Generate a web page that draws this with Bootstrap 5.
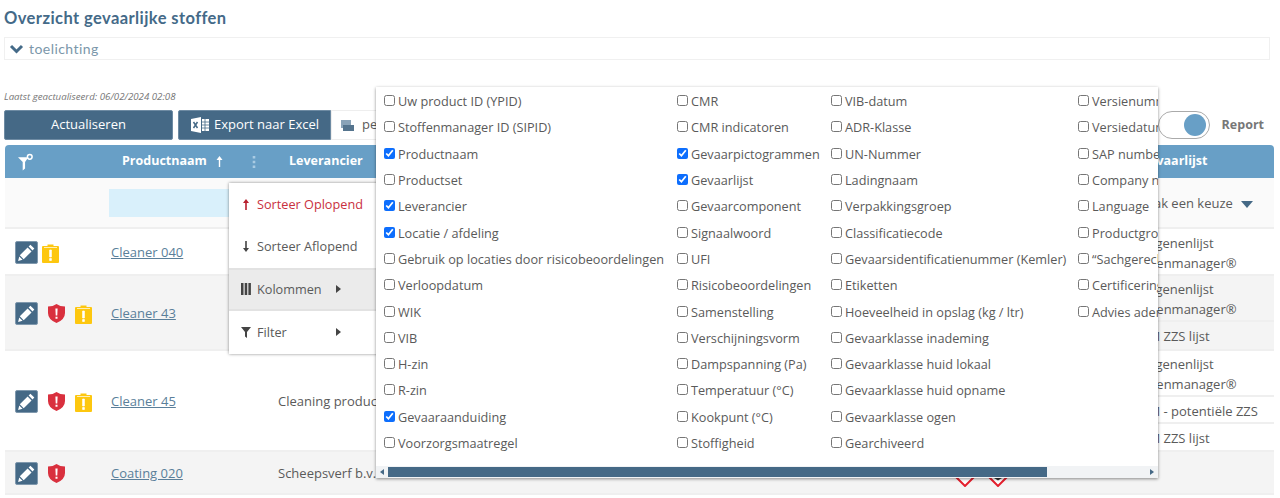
<!DOCTYPE html>
<html lang="nl">
<head>
    <meta charset="UTF-8">
    <title>Overzicht gevaarlijke stoffen</title>
    <link href="https://cdn.jsdelivr.net/npm/bootstrap@5.3.0/dist/css/bootstrap.min.css" rel="stylesheet">
    <style>
        body {
            font-family: "Open Sans", sans-serif;
            font-size: 13px;
            color: #5a5a5a;
            background: #fff;
            position: relative;
            overflow: hidden;
            height: 498px;
        }

        .page-title {
            font-family: Lato, sans-serif;
            font-size: 16.500px;
            font-weight: 700;
            letter-spacing: .42px;
            color: #446a88;
            line-height: 20px;
            margin: 8px 0 9px 4px;
        }

        .toelichting-bar {
            height: 23px;
            margin: 0 10px 0 4px;
            border: 1px solid #f0f0f0;
            color: #7b97aa;
            font-family: Lato, sans-serif;
            font-size: 14px;
            letter-spacing: .45px;
            padding-left: 4px;
            gap: 5px;
        }

        .updated-text {
            font-size: 9.700px;
            font-style: italic;
            color: #777;
            line-height: 12px;
            margin: 31px 0 7px 4px;
        }

        .tool-row {
            height: 30px;
            margin: 0 6px 5px 4px;
        }

        .btn-blue {
            background: #456986;
            color: #fff;
            border: 1px solid #6e8ba3;
            border-radius: 2px;
            height: 30px;
            padding: 0;
            font-size: 13px;
        }

        .btn-refresh { width: 169px; margin-right: 5px; }

        .btn-export { width: 153px; border-radius: 2px 0 0 2px; gap: 5px; padding-left: 1px; }

        .select-box {
            width: 200px;
            height: 30px;
            padding-left: 9px;
            gap: 8px;
            border: 1px solid #eee;
            font-size: 13px;
        }

        .report-toggle {
            width: 52px;
            height: 28px;
            border: 1px solid #aaa;
            border-radius: 14px;
            padding-right: 3px;
            margin-right: 12px;
        }

        .toggle-dot {
            width: 22px;
            height: 22px;
            border-radius: 50%;
            background: #689fc6;
        }

        .report-label {
            font-size: 12.500px;
            font-weight: 700;
            color: #777;
            margin-right: 10px;
        }

        .stof-table {
            table-layout: fixed;
            width: 1269px;
            margin-left: 5px;
            border-collapse: separate;
            border-spacing: 0;
        }

        .w-a { width: 100px; }
        .w-b { width: 165px; }
        .w-c { width: 200px; }
        .w-d { width: 115px; }
        .w-e { width: 355px; }
        .w-f { width: 185px; }
        .w-g { width: 149px; }

        .stof-table th {
            background: #689fc6;
            color: #fff;
            height: 33px;
            font-size: 12.500px;
            font-weight: 700;
            padding: 0;
            white-space: nowrap;
        }

        .stof-table th:first-child { border-radius: 4px 0 0 0; padding-left: 13px; }
        .stof-table th:last-child { border-radius: 0 4px 0 0; padding-left: 15px; }

        .head-name { margin-left: 17px; }
        .head-sort { margin-left: 9px; }
        .head-dots { margin-left: 29px; }
        .head-lev { margin-left: 19px; }

        .stof-table td {
            padding: 0 0 0 7px;
            white-space: nowrap;
            overflow: hidden;
            border-bottom: 2px solid #efefef;
            font-size: 13px;
        }

        .row-filter td { height: 51px; background: #fafafa; }
        .row-a td { height: 47px; background: #fff; padding-top: 2px; }
        .row-b td { height: 75px; background: #f4f4f4; padding-top: 2px; }
        .row-c td { height: 101px; background: #fff; padding-top: 2px; }
        .row-d td { height: 43px; background: #f4f4f4; padding-top: 2px; }

        .stof-table td:first-child { padding-left: 10px; }
        .stof-table td:nth-child(2) { padding-left: 6px; }
        .stof-table td:nth-child(3) { padding-left: 8px; }
        .stof-table td:last-child { padding-left: 0; padding-top: 0; vertical-align: top; }

        .stof-table td.filter-cell { padding-left: 4px; }
        .stof-table td.hazard-cell { padding-bottom: 3px; }
        .stof-table td.picto-cell { padding-left: 11px; padding-top: 0; }

        .filter-input {
            height: 28px;
            width: 190px;
            background: #d9f0fb;
        }

        .keuze-cell {
            height: 49px;
            padding: 3px 21px 0 10px;
        }

        .keuze-arrow {
            width: 0;
            height: 0;
            border-left: 6px solid transparent;
            border-right: 6px solid transparent;
            border-top: 7px solid #456986;
        }

        .list-cell {
            padding-left: 3px;
            line-height: 20px;
            border-bottom: 2px solid #efefef;
        }

        .list-cell:last-child { border-bottom: 0; }
        .list-two { height: 46px; padding-top: 3px; }
        .list-one { height: 27px; padding-top: 4px; padding-left: 4px; }
        .list-one:last-child { height: 26px; }
        .row-b .list-one:last-child { height: 27px; }
        .row-a .list-two { height: 45px; padding-top: 4px; }

        .product-link { color: #5a7f9a; }

        .edit-btn {
            width: 23px;
            height: 23px;
            background: #456986;
            border: 1px solid #7f98ad;
            border-radius: 2px;
        }

        .icon-row { height: 24px; }
        .gap-shield { margin-left: 10px; }
        .gap-clip { margin-left: 10px; }
        .gap-clip-first { margin-left: 4px; }
        .picto-gap { margin-left: 5px; }

        .context-menu {
            position: absolute;
            left: 229px;
            top: 183px;
            width: 150px;
            height: 171px;
            background: #fff;
            box-shadow: 0 0 3px rgba(0, 0, 0, .45);
            font-size: 12.700px;
        }

        .menu-item {
            height: 42.600px;
            padding-left: 12px;
            gap: 6px;
        }

        .menu-item.is-red { color: #c9303e; }
        .menu-item.is-open {
            background: #ebebeb;
            border-top: 2px solid #e2e2e2;
            border-bottom: 2px solid #e2e2e2;
        }

        .menu-icon { width: 10px; flex: none; }
        .menu-tri {
            width: 0;
            height: 0;
            margin-left: auto;
            margin-right: 38px;
            border-top: 4px solid transparent;
            border-bottom: 4px solid transparent;
            border-left: 5px solid #444;
        }

        .column-panel {
            position: absolute;
            left: 376px;
            top: 87px;
            width: 782px;
            height: 391px;
            background: #fff;
            box-shadow: 0 1px 3px rgba(0, 0, 0, .45);
            overflow: hidden;
        }

        .panel-cols { padding: 1.500px 0 0 8px; white-space: nowrap; }
        .panel-col { flex: none; }
        .col-one { width: 293px; }
        .col-two { width: 154px; }
        .col-three { width: 247px; }

        .check-line {
            height: 26.300px;
            gap: 3px;
            font-size: 12.700px;
            color: #5a5a5a;
        }

        .check-line input {
            width: 11px;
            height: 11px;
            margin: 0;
            flex: none;
            accent-color: #0d6efd;
            position: relative;
            top: -1px;
        }

        .fake-scroll {
            position: absolute;
            left: 0;
            right: 0;
            bottom: 0;
            height: 12px;
            background: #f1f3f5;
            padding: 0 4px;
        }

        .scroll-thumb {
            width: 659px;
            height: 10px;
            margin-left: 4px;
            background: #456986;
        }

        .scroll-end-l, .scroll-end-r {
            width: 0;
            height: 0;
            border-top: 3px solid transparent;
            border-bottom: 3px solid transparent;
        }

        .scroll-end-l { border-right: 4px solid #456986; }
        .scroll-end-r { border-left: 4px solid #456986; margin-left: auto; margin-right: 0; }
    </style>
</head>
<body>

<h1 class="page-title">Overzicht gevaarlijke stoffen</h1>

<div class="toelichting-bar d-flex align-items-center">
    <svg width="15" height="10" viewBox="0 0 15 10"><path d="M2 2l5.500 5.500L13 2" fill="none" stroke="#446a88" stroke-width="3"/></svg>
    <span>toelichting</span>
</div>

<div class="updated-text">Laatst geactualiseerd: 06/02/2024 02:08</div>

<div class="tool-row d-flex align-items-center">
    <button class="btn-blue btn-refresh">Actualiseren</button>
    <button class="btn-blue btn-export d-flex align-items-center justify-content-center">
        <svg width="18" height="16" viewBox="0 0 18 16">
            <path d="M0 2l10-2v16L0 14z" fill="#fff"/>
            <path d="M11 2h7v12h-7z" fill="#fff"/>
            <path d="M2.500 5l4 6M6.500 5l-4 6" stroke="#456986" stroke-width="1.500"/>
            <path d="M11 5h7M11 8h7M11 11h7M14 2v12" stroke="#456986" stroke-width=".8"/>
        </svg>
        <span>Export naar Excel</span>
    </button>
    <div class="select-box d-flex align-items-center">
        <svg width="13" height="11" viewBox="0 0 13 11"><path d="M0 0h10v8H0z" fill="#8aa3b8"/><path d="M2 5h11v6H2z" fill="#55748e"/></svg>
        <span>personeel</span>
    </div>
    <div class="report-toggle d-flex align-items-center justify-content-end ms-auto">
        <span class="toggle-dot"></span>
    </div>
    <span class="report-label">Report</span>
</div>

<table class="stof-table">
    <colgroup>
        <col class="w-a"><col class="w-b"><col class="w-c"><col class="w-d"><col class="w-e"><col class="w-f"><col class="w-g">
    </colgroup>
    <thead>
    <tr>
        <th>
            <svg width="16" height="18" viewBox="0 0 17 18">
                <path d="M0 4h11L7.500 9v7L5 18V9z" fill="#fff"/>
                <circle cx="12.500" cy="3.500" r="2.500" fill="none" stroke="#fff" stroke-width="1.600"/>
            </svg>
        </th>
        <th>
            <div class="d-flex align-items-center">
                <span class="head-name">Productnaam</span>
                <svg class="head-sort" width="7" height="11" viewBox="0 0 7 11"><path d="M3.500 0L6.500 4H4.200v7H2.800V4H.5z" fill="#fff"/></svg>
                <svg class="head-dots" width="4" height="12" viewBox="0 0 4 12"><path d="M.7 0h2.600v2.600H.7zM.7 4.700h2.600v2.600H.7zM.7 9.400h2.600V12H.7z" fill="#a9cbe3"/></svg>
            </div>
        </th>
        <th><span class="head-lev">Leverancier</span></th>
        <th>Locatie</th>
        <th>Gevaaraanduiding</th>
        <th>Gevaarpictogrammen</th>
        <th>Gevaarlijst</th>
    </tr>
    </thead>
    <tbody>
    <tr class="row-filter">
        <td></td>
        <td class="filter-cell" colspan="2"><div class="filter-input"></div></td>
        <td></td>
        <td></td>
        <td></td>
        <td>
            <div class="keuze-cell d-flex align-items-center justify-content-between">
                <span>Maak een keuze</span>
                <span class="keuze-arrow"></span>
            </div>
        </td>
    </tr>
    <tr class="row-a">
        <td>
            <div class="icon-row d-flex align-items-center">
                <span class="edit-btn d-flex align-items-center justify-content-center">
                    <svg width="19" height="19" viewBox="0 0 17 17"><path d="M12 1.500l3.500 3.500-1.600 1.600-3.500-3.500zM9.500 4l3.500 3.500L6 14.500 2.500 11zM2 12l3 3-4 1z" fill="#fff"/></svg>
                </span>
                <svg class="gap-clip-first" width="17" height="20" viewBox="0 0 17 20"><path d="M1 3h4.500V1.500h6V3H16q1 0 1 1v15q0 1-1 1H1q-1 0-1-1V4q0-1 1-1z" fill="#fdc70f"/><path d="M2 4.500h13M7.600 7h1.800v7H7.600zM7.600 15.500h1.800v2H7.600z" stroke="#fff" stroke-width=".7" fill="#fff"/></svg>
            </div>
        </td>
        <td><a class="product-link" href="#">Cleaner 040</a></td>
        <td></td>
        <td></td>
        <td></td>
        <td></td>
        <td>
            <div class="list-cell list-two">Allergenenlijst<br>Stoffenmanager®</div>
        </td>
    </tr>
    <tr class="row-b">
        <td>
            <div class="icon-row d-flex align-items-center">
                <span class="edit-btn d-flex align-items-center justify-content-center">
                    <svg width="19" height="19" viewBox="0 0 17 17"><path d="M12 1.500l3.500 3.500-1.600 1.600-3.500-3.500zM9.500 4l3.500 3.500L6 14.500 2.500 11zM2 12l3 3-4 1z" fill="#fff"/></svg>
                </span>
                <svg class="gap-shield" width="17" height="19" viewBox="0 0 17 19"><path d="M8.500 0q3.500 2.500 8.500 2.500V9q0 6.500-8.500 10Q0 15.500 0 9V2.500Q5 2.500 8.500 0z" fill="#d9303e"/><path d="M7.400 4.500h2.200l-.3 7H7.700zM7.500 12.800h2v2h-2z" fill="#fff"/></svg>
                <svg class="gap-clip" width="17" height="20" viewBox="0 0 17 20"><path d="M1 3h4.500V1.500h6V3H16q1 0 1 1v15q0 1-1 1H1q-1 0-1-1V4q0-1 1-1z" fill="#fdc70f"/><path d="M2 4.500h13M7.600 7h1.800v7H7.600zM7.600 15.500h1.800v2H7.600z" stroke="#fff" stroke-width=".7" fill="#fff"/></svg>
            </div>
        </td>
        <td><a class="product-link" href="#">Cleaner 43</a></td>
        <td></td>
        <td></td>
        <td></td>
        <td></td>
        <td>
            <div class="list-cell list-two">Allergenenlijst<br>Stoffenmanager®</div>
            <div class="list-cell list-one">RIVM ZZS lijst</div>
        </td>
    </tr>
    <tr class="row-c">
        <td>
            <div class="icon-row d-flex align-items-center">
                <span class="edit-btn d-flex align-items-center justify-content-center">
                    <svg width="19" height="19" viewBox="0 0 17 17"><path d="M12 1.500l3.500 3.500-1.600 1.600-3.500-3.500zM9.500 4l3.500 3.500L6 14.500 2.500 11zM2 12l3 3-4 1z" fill="#fff"/></svg>
                </span>
                <svg class="gap-shield" width="17" height="19" viewBox="0 0 17 19"><path d="M8.500 0q3.500 2.500 8.500 2.500V9q0 6.500-8.500 10Q0 15.500 0 9V2.500Q5 2.500 8.500 0z" fill="#d9303e"/><path d="M7.400 4.500h2.200l-.3 7H7.700zM7.500 12.800h2v2h-2z" fill="#fff"/></svg>
                <svg class="gap-clip" width="17" height="20" viewBox="0 0 17 20"><path d="M1 3h4.500V1.500h6V3H16q1 0 1 1v15q0 1-1 1H1q-1 0-1-1V4q0-1 1-1z" fill="#fdc70f"/><path d="M2 4.500h13M7.600 7h1.800v7H7.600zM7.600 15.500h1.800v2H7.600z" stroke="#fff" stroke-width=".7" fill="#fff"/></svg>
            </div>
        </td>
        <td><a class="product-link" href="#">Cleaner 45</a></td>
        <td>Cleaning products b.v.</td>
        <td></td>
        <td></td>
        <td></td>
        <td>
            <div class="list-cell list-two">Allergenenlijst<br>Stoffenmanager®</div>
            <div class="list-cell list-one">RIVM - potentiële ZZS</div>
            <div class="list-cell list-one">RIVM ZZS lijst</div>
        </td>
    </tr>
    <tr class="row-d">
        <td>
            <div class="icon-row d-flex align-items-center">
                <span class="edit-btn d-flex align-items-center justify-content-center">
                    <svg width="19" height="19" viewBox="0 0 17 17"><path d="M12 1.500l3.500 3.500-1.600 1.600-3.500-3.500zM9.500 4l3.500 3.500L6 14.500 2.500 11zM2 12l3 3-4 1z" fill="#fff"/></svg>
                </span>
                <svg class="gap-shield" width="17" height="19" viewBox="0 0 17 19"><path d="M8.500 0q3.500 2.500 8.500 2.500V9q0 6.500-8.500 10Q0 15.500 0 9V2.500Q5 2.500 8.500 0z" fill="#d9303e"/><path d="M7.400 4.500h2.200l-.3 7H7.700zM7.500 12.800h2v2h-2z" fill="#fff"/></svg>
            </div>
        </td>
        <td><a class="product-link" href="#">Coating 020</a></td>
        <td>Scheepsverf b.v.</td>
        <td></td>
        <td class="hazard-cell">H304, H315, H319</td>
        <td class="picto-cell">
            <div class="d-flex">
                <svg width="28" height="28" viewBox="0 0 28 28"><path d="M14 1l13 13-13 13L1 14z" fill="#fff" stroke="#e5202e" stroke-width="2"/></svg>
                <svg class="picto-gap" width="28" height="28" viewBox="0 0 28 28"><path d="M14 1l13 13-13 13L1 14z" fill="#fff" stroke="#e5202e" stroke-width="2"/><path d="M10 19h8l-4 2.500z" fill="#333"/></svg>
            </div>
        </td>
        <td></td>
    </tr>
    </tbody>
</table>

<!-- Kolom menu -->
<div class="context-menu">
    <div class="menu-item is-red d-flex align-items-center">
        <svg class="menu-icon" width="10" height="11" viewBox="0 0 10 11"><path d="M5 0l3 4H5.800v7H4.200V4H2z" fill="#b8202e"/></svg>
        <span>Sorteer Oplopend</span>
    </div>
    <div class="menu-item d-flex align-items-center">
        <svg class="menu-icon" width="10" height="11" viewBox="0 0 10 11"><path d="M5 11L2 7h2.200V0h1.600v7H8z" fill="#444"/></svg>
        <span>Sorteer Aflopend</span>
    </div>
    <div class="menu-item is-open d-flex align-items-center">
        <svg class="menu-icon" width="10" height="12" viewBox="0 0 10 12"><path d="M0 0h2.500v12H0zM3.700 0h2.500v12H3.700zM7.400 0h2.500v12H7.400z" fill="#444"/></svg>
        <span>Kolommen</span>
        <span class="menu-tri"></span>
    </div>
    <div class="menu-item d-flex align-items-center">
        <svg class="menu-icon" width="10" height="11" viewBox="0 0 10 11"><path d="M0 0h10L6 5v6L4 9.500V5z" fill="#444"/></svg>
        <span>Filter</span>
        <span class="menu-tri"></span>
    </div>
</div>

<!-- Kolommen keuze -->
<div class="column-panel">
    <div class="panel-cols d-flex">
        <div class="panel-col col-one">
            <label class="check-line d-flex align-items-center"><input type="checkbox"> Uw product ID (YPID)</label>
            <label class="check-line d-flex align-items-center"><input type="checkbox"> Stoffenmanager ID (SIPID)</label>
            <label class="check-line d-flex align-items-center"><input type="checkbox" checked> Productnaam</label>
            <label class="check-line d-flex align-items-center"><input type="checkbox"> Productset</label>
            <label class="check-line d-flex align-items-center"><input type="checkbox" checked> Leverancier</label>
            <label class="check-line d-flex align-items-center"><input type="checkbox" checked> Locatie / afdeling</label>
            <label class="check-line d-flex align-items-center"><input type="checkbox"> Gebruik op locaties door risicobeoordelingen</label>
            <label class="check-line d-flex align-items-center"><input type="checkbox"> Verloopdatum</label>
            <label class="check-line d-flex align-items-center"><input type="checkbox"> WIK</label>
            <label class="check-line d-flex align-items-center"><input type="checkbox"> VIB</label>
            <label class="check-line d-flex align-items-center"><input type="checkbox"> H-zin</label>
            <label class="check-line d-flex align-items-center"><input type="checkbox"> R-zin</label>
            <label class="check-line d-flex align-items-center"><input type="checkbox" checked> Gevaaraanduiding</label>
            <label class="check-line d-flex align-items-center"><input type="checkbox"> Voorzorgsmaatregel</label>
        </div>
        <div class="panel-col col-two">
            <label class="check-line d-flex align-items-center"><input type="checkbox"> CMR</label>
            <label class="check-line d-flex align-items-center"><input type="checkbox"> CMR indicatoren</label>
            <label class="check-line d-flex align-items-center"><input type="checkbox" checked> Gevaarpictogrammen</label>
            <label class="check-line d-flex align-items-center"><input type="checkbox" checked> Gevaarlijst</label>
            <label class="check-line d-flex align-items-center"><input type="checkbox"> Gevaarcomponent</label>
            <label class="check-line d-flex align-items-center"><input type="checkbox"> Signaalwoord</label>
            <label class="check-line d-flex align-items-center"><input type="checkbox"> UFI</label>
            <label class="check-line d-flex align-items-center"><input type="checkbox"> Risicobeoordelingen</label>
            <label class="check-line d-flex align-items-center"><input type="checkbox"> Samenstelling</label>
            <label class="check-line d-flex align-items-center"><input type="checkbox"> Verschijningsvorm</label>
            <label class="check-line d-flex align-items-center"><input type="checkbox"> Dampspanning (Pa)</label>
            <label class="check-line d-flex align-items-center"><input type="checkbox"> Temperatuur (°C)</label>
            <label class="check-line d-flex align-items-center"><input type="checkbox"> Kookpunt (°C)</label>
            <label class="check-line d-flex align-items-center"><input type="checkbox"> Stoffigheid</label>
        </div>
        <div class="panel-col col-three">
            <label class="check-line d-flex align-items-center"><input type="checkbox"> VIB-datum</label>
            <label class="check-line d-flex align-items-center"><input type="checkbox"> ADR-Klasse</label>
            <label class="check-line d-flex align-items-center"><input type="checkbox"> UN-Nummer</label>
            <label class="check-line d-flex align-items-center"><input type="checkbox"> Ladingnaam</label>
            <label class="check-line d-flex align-items-center"><input type="checkbox"> Verpakkingsgroep</label>
            <label class="check-line d-flex align-items-center"><input type="checkbox"> Classificatiecode</label>
            <label class="check-line d-flex align-items-center"><input type="checkbox"> Gevaarsidentificatienummer (Kemler)</label>
            <label class="check-line d-flex align-items-center"><input type="checkbox"> Etiketten</label>
            <label class="check-line d-flex align-items-center"><input type="checkbox"> Hoeveelheid in opslag (kg / ltr)</label>
            <label class="check-line d-flex align-items-center"><input type="checkbox"> Gevaarklasse inademing</label>
            <label class="check-line d-flex align-items-center"><input type="checkbox"> Gevaarklasse huid lokaal</label>
            <label class="check-line d-flex align-items-center"><input type="checkbox"> Gevaarklasse huid opname</label>
            <label class="check-line d-flex align-items-center"><input type="checkbox"> Gevaarklasse ogen</label>
            <label class="check-line d-flex align-items-center"><input type="checkbox"> Gearchiveerd</label>
        </div>
        <div class="panel-col">
            <label class="check-line d-flex align-items-center"><input type="checkbox"> Versienummer</label>
            <label class="check-line d-flex align-items-center"><input type="checkbox"> Versiedatum</label>
            <label class="check-line d-flex align-items-center"><input type="checkbox"> SAP number</label>
            <label class="check-line d-flex align-items-center"><input type="checkbox"> Company name</label>
            <label class="check-line d-flex align-items-center"><input type="checkbox"> Language</label>
            <label class="check-line d-flex align-items-center"><input type="checkbox"> Productgroep</label>
            <label class="check-line d-flex align-items-center"><input type="checkbox"> “Sachgerechte Entsorgung”</label>
            <label class="check-line d-flex align-items-center"><input type="checkbox"> Certificering</label>
            <label class="check-line d-flex align-items-center"><input type="checkbox"> Advies ademhaling</label>
        </div>
    </div>
    <div class="fake-scroll d-flex align-items-center">
        <span class="scroll-end-l"></span>
        <div class="scroll-thumb"></div>
        <span class="scroll-end-r"></span>
    </div>
</div>

<script src="https://cdn.jsdelivr.net/npm/bootstrap@5.3.0/dist/js/bootstrap.bundle.min.js"></script>
</body>
</html>
